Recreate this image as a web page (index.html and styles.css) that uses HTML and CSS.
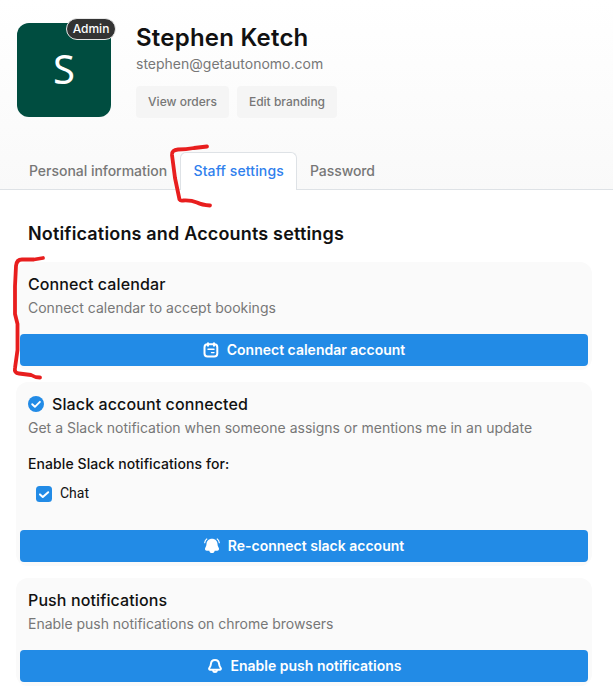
FILE: index.html
```html
<!DOCTYPE html>
<html lang="en">
<head>
<meta charset="utf-8">
<title>Staff settings</title>
<link rel="stylesheet" href="styles.css">
</head>
<body>
<header class="header">
  <div class="profile">
    <div class="avatar">S<span class="badge">Admin</span></div>
    <div class="identity">
      <h1 class="name">Stephen Ketch</h1>
      <div class="email">stephen@getautonomo.com</div>
      <div class="actions">
        <button class="action orders">View orders</button>
        <button class="action branding">Edit branding</button>
      </div>
    </div>
  </div>
  <nav class="tabs">
    <a class="tab tab-personal"><span>Personal information</span></a>
    <a class="tab tab-active"><span>Staff settings</span></a>
    <a class="tab tab-password"><span>Password</span></a>
  </nav>
</header>
<main class="main">
  <h2 class="heading">Notifications and Accounts settings</h2>
  <section class="card">
    <h3 class="title">Connect calendar</h3>
    <p class="desc">Connect calendar to accept bookings</p>
    <button class="primary">
      <svg class="icon" viewBox="0 0 16 16" fill="none" stroke="#fff" stroke-linecap="round"><rect x="1.500" y="2.300" width="12.800" height="12.200" rx="3" stroke-width="2"/><path d="M5 1.200v2.500M11 1.200v2.500" stroke-width="2"/><path d="M5 7.300h6M8.500 10.600h2.500" stroke-width="1.400"/></svg>
      <span>Connect calendar account</span>
    </button>
  </section>
  <section class="card card-slack">
    <h3 class="title title-row">
      <svg class="icon" viewBox="0 0 16 16"><circle cx="8" cy="8" r="8" fill="#228be6"/><path d="M4.200 8.200l2.700 2.600 5-5" fill="none" stroke="#fff" stroke-width="1.900" stroke-linecap="round" stroke-linejoin="round"/></svg>
      <span>Slack account connected</span>
    </h3>
    <p class="desc">Get a Slack notification when someone assigns or mentions me in an update</p>
    <h4 class="subtitle">Enable Slack notifications for:</h4>
    <label class="check">
      <svg class="icon checkbox" viewBox="0 0 16 16"><rect width="16" height="16" rx="3.500" fill="#228be6"/><path d="M4 8.400l2.800 2.600 5.400-4.800" fill="none" stroke="#fff" stroke-width="2" stroke-linecap="round" stroke-linejoin="round"/></svg>
      <span>Chat</span>
    </label>
    <button class="primary">
      <svg class="icon" viewBox="0 0 16 16" fill="#fff"><path d="M8 .8c3.200 0 5.300 2.200 5.500 5 .1 1.600.3 2.500 1.100 3.700 1 1.500.2 3.200-1.500 3.200H2.900c-1.700 0-2.500-1.700-1.500-3.200.8-1.200 1-2.100 1.100-3.700C2.700 3 4.800.8 8 .8zM5.200 12.500h5.600c-.2 1.700-1.300 2.600-2.800 2.600s-2.600-.9-2.800-2.600z"/><path d="M2.800 1Q1 2.200.7 4.700M13.200 1q1.800 1.200 2.100 3.700" fill="none" stroke="#fff" stroke-width="1.200" stroke-linecap="round"/></svg>
      <span>Re-connect slack account</span>
    </button>
  </section>
  <section class="card">
    <h3 class="title">Push notifications</h3>
    <p class="desc desc-push">Enable push notifications on chrome browsers</p>
    <button class="primary">
      <svg class="icon" viewBox="0 0 16 16" fill="none" stroke="#fff" stroke-width="2" stroke-linejoin="round" stroke-linecap="round"><path d="M8 2c2.500 0 3.900 1.700 4.100 4 .1 1.800.5 2.700 1.500 3.900.7.900.2 1.900-.8 1.900H3.200c-1 0-1.500-1-.8-1.900 1-1.200 1.400-2.100 1.500-3.900C4.100 3.700 5.500 2 8 2zM6 12.300c.2 1.400 1 1.700 2 1.700s1.800-.3 2-1.700"/></svg>
      <span>Enable push notifications</span>
    </button>
  </section>
</main>
<svg class="annotation" viewBox="0 0 613 698" fill="none" stroke="#e81e1e" stroke-width="3.800" stroke-linecap="round" stroke-linejoin="round">
  <path d="M207 146.500L194 148Q186 149.500 178 149.500Q171.500 150 172 155L175 178L179.500 199.500Q180.500 201 183 200.500Q191 200 197 202.500Q202 205 210 205.500"/>
  <path d="M43 258L34 259.500H22Q16.500 259.500 16 266L15 286V314L17.500 324V350L15 368Q14 373 19 373.500L31 375Q35 377.500 40 377.500"/>
</svg>
</body>
</html>
```

FILE: styles.css
```css
* { box-sizing: border-box; }
body {
  margin: 0;
  min-height: 698px;
  position: relative;
  background: #fff;
  color: #111;
  font-family: Inter, "Liberation Sans", sans-serif;
}
h1, h2, h3, h4, p { margin: 0; }
button { border: 0; padding: 0; font-family: inherit; }
span { white-space: nowrap; }

.header {
  height: 190px;
  display: flex;
  flex-direction: column;
  justify-content: space-between;
  background: linear-gradient(#fff, #f9f9f9);
}
.profile { display: flex; gap: 25px; padding: 23px 17px 0; }
.avatar {
  position: relative;
  display: flex;
  align-items: center;
  justify-content: center;
  width: 94px;
  height: 94px;
  padding-bottom: 2px;
  border-radius: 12px;
  background: #004d40;
  color: #fff;
  font: 40px/92px "Noto Sans", "Open Sans", sans-serif;
}
.badge {
  position: absolute;
  top: -5px;
  right: -5px;
  width: 50px;
  height: 22px;
  border: 1px solid #e8e8e8;
  border-radius: 11px;
  background: #333;
  text-align: center;
  font: 500 12px/19px Inter, sans-serif;
}
.name { font-size: 24px; line-height: 30px; font-weight: 600; letter-spacing: .22px; }
.email { font-size: 14px; line-height: 20px; margin-top: 1px; color: #777; }
.actions { display: flex; gap: 8px; margin-top: 12px; }
.action {
  height: 32px;
  padding-bottom: 1px;
  border-radius: 4px;
  background: #f5f5f5;
  color: #777;
  font-size: 12px;
  font-weight: 500;
}
.orders { width: 93px; }
.branding { width: 100px; }

.tabs { display: flex; height: 38px; padding-left: 16px; border-bottom: 1px solid #dee2e6; }
.tab {
  height: 38px;
  padding: 0 12px;
  border: 1px solid transparent;
  border-bottom: 0;
  border-radius: 6px 6px 0 0;
  font-size: 14px;
  line-height: 36px;
  font-weight: 500;
  color: #777;
}
.tab-personal { width: 164px; letter-spacing: -.03px; }
.tab-active { width: 117px; padding-left: 12.5px; background: #fff; border-color: #dee2e6; color: #2f80ed; letter-spacing: .12px; }
.tab-password { letter-spacing: -.08px; }

.main { padding: 32px 21px 0 16px; }
.heading { padding-left: 12px; font-size: 18px; line-height: 24px; font-weight: 600; letter-spacing: .17px; }
.card {
  display: flex;
  flex-direction: column;
  height: 108px;
  margin-top: 12px;
  padding: 10px 4px 4px;
  border-radius: 12px;
  background: #fafafa;
}
.heading + .card { margin-top: 16px; }
.card-slack { height: 184px; }
.title { padding-left: 8px; font-size: 16px; line-height: 24px; font-weight: 500; letter-spacing: .11px; }
.title-row { display: flex; align-items: center; gap: 8px; }
.desc { padding-left: 8px; font-size: 14px; line-height: 22px; margin-top: 1px; color: #777; }
.desc-push { letter-spacing: -.02px; }
.subtitle { padding-left: 8px; margin-top: 14px; font-size: 14px; line-height: 22px; font-weight: 500; letter-spacing: .08px; }
.check {
  display: flex;
  align-items: center;
  gap: 8px;
  height: 20px;
  margin-top: 8px;
  padding-left: 16px;
  font: 14px/20px Roboto, sans-serif;
}
.icon { width: 16px; height: 16px; flex: none; }
.checkbox { margin-top: 2px; }
.primary {
  display: flex;
  align-items: center;
  justify-content: center;
  gap: 8px;
  height: 32px;
  margin-top: auto;
  padding-bottom: 1px;
  border-radius: 4px;
  background: #228be6;
  color: #fff;
  font-size: 14px;
  font-weight: 600;
}
.annotation { position: absolute; inset: 0; width: 613px; height: 698px; pointer-events: none; }
```
